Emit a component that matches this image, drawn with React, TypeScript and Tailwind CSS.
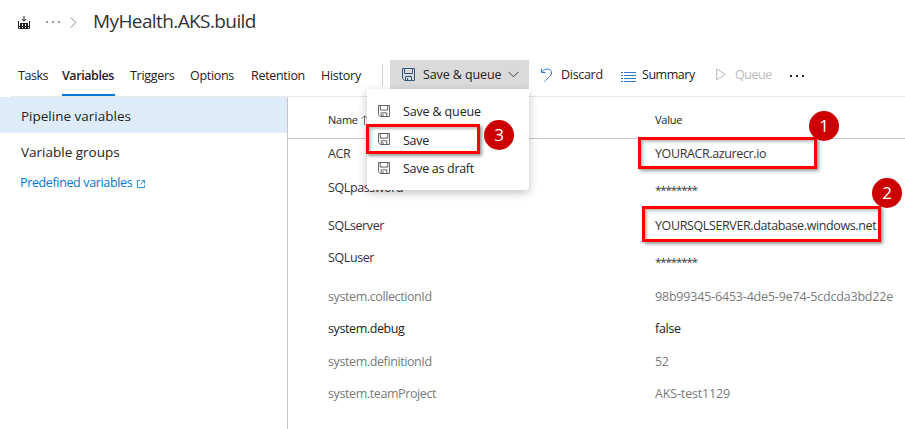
import React from "react";

const font = "font-['Open_Sans','Noto_Sans',sans-serif]";

function SaveIcon({ className }: { className: string }) {
  return (
    <svg viewBox="0 0 13 13" fill="none" stroke="currentColor" className={className}>
      <path d="M.5.5h12v12h-10l-2-2zM2.5.5v5h8v-5M3.500 12.500v-4h6v4M5.500 10v2.500" />
    </svg>
  );
}

function Dots({ className, gap }: { className: string; gap: string }) {
  return (
    <div className={`flex items-center ${gap} ${className}`}>
      <i className="size-[2px] bg-current" />
      <i className="size-[2px] bg-current" />
      <i className="size-[2px] bg-current" />
    </div>
  );
}

const tabs = [
  { name: "Tasks", cls: "w-[28px] mr-[16px] pb-[10px] tracking-[-0.45px]" },
  { name: "Variables", cls: "w-[53px] mr-[15px] pb-[8px] tracking-[-0.42px] font-semibold border-b-2 border-[#0078d4]" },
  { name: "Triggers", cls: "w-[44px] mr-[16px] pb-[10px] tracking-[-0.3px]" },
  { name: "Options", cls: "w-[44px] mr-[17px] pb-[10px] tracking-[-0.3px]" },
  { name: "Retention", cls: "w-[54px] mr-[16px] pb-[10px] tracking-[-0.3px]" },
  { name: "History", cls: "w-[40px] pb-[10px] tracking-[-0.25px]" },
];

const dark = "text-[#333]";
const muted = "text-[#7a7a7a]";

const rows = [
  { name: "ACR", value: "YOURACR.azurecr.io", h: "h-[31px]", n: "", v: "tracking-[-0.38px]", c: dark },
  { name: "SQLpassword", value: "********", h: "h-[38px]", n: "pb-[2px]", v: "tracking-[-1.1px] text-[11.5px] pt-px", c: dark },
  { name: "SQLserver", value: "YOURSQLSERVER.database.windows.net", h: "h-[35px]", n: "pt-[2px]", v: "pt-[2px] tracking-[-0.38px]", c: dark },
  { name: "SQLuser", value: "********", h: "h-[38px]", n: "pb-[8px]", v: "tracking-[-1.1px] text-[11.5px]", c: dark },
  { name: "system.collectionId", value: "98b99345-6453-4de5-9e74-5cdcda3bd22e", h: "h-[32px]", n: "", v: "tracking-[-0.19px]", c: muted },
  { name: "system.debug", value: "false", h: "h-[32px]", n: "", v: "tracking-[-0.3px]", c: "text-[#222]" },
  { name: "system.definitionId", value: "52", h: "h-[33px]", n: "pt-[2px]", v: "pt-[2px] tracking-[-0.3px]", c: muted },
  { name: "system.teamProject", value: "AKS-test1129", h: "h-[32px]", n: "", v: "tracking-[-0.15px]", c: muted },
];

const menu = [
  { label: "Save & queue", cls: "pt-[2px] tracking-[-0.15px]" },
  { label: "Save", cls: "pt-[3px] tracking-[-0.25px]" },
  { label: "Save as draft", cls: "pt-[2px] tracking-[-0.3px]" },
];

function Badge({ n, cls }: { n: number; cls: string }) {
  return (
    <div className={`absolute flex size-[30px] items-center justify-center rounded-full bg-[#c00] pb-px text-[17px] leading-none text-white ${cls}`}>{n}</div>
  );
}

export default function App() {
  return (
    <div className={`relative flex h-[429px] w-[905px] flex-col overflow-hidden whitespace-nowrap bg-white text-[12.5px] text-[#222] ${font}`}>
      <header className="flex h-[44px] items-center pl-[18px]">
        <svg viewBox="0 0 12 13" className="w-3 shrink-0" fill="none" stroke="#222">
          <path d="M6 0v5M3.800 3L6 5.200 8.200 3M.5 5v7.500h11V5" />
          <path d="M2 7.500h8M1 10.500h10" />
          <path strokeDasharray="2 1" d="M2 8.500h8M2 9.500h8" />
          <path d="M2 11.500h2M5 11.500h2M8 11.500h2" />
        </svg>
        <Dots gap="gap-[4px]" className="ml-[16px] w-[16px] text-[#999]" />
        <svg viewBox="0 0 7 11" className="ml-[8px] w-[7px]" fill="none" stroke="#888"><path d="M.8.5l5 5-5 5" /></svg>
        <h1 className="ml-[16px] pb-px text-[19px] tracking-[-0.6px] text-[#333]">MyHealth.AKS.build</h1>
      </header>
      <nav className="ml-[10px] flex h-[53px] items-stretch border-b border-[#eaeaea] pl-[8px]">
        {tabs.map((t) => (
          <div key={t.name} className={`flex items-end ${t.cls}`}>{t.name}</div>
        ))}
        <div className="ml-[21px] mt-[20px] h-[22px] w-px bg-[#ccc]" />
        <div className="ml-[7px] mt-[16px] flex h-[29px] w-[139px] items-center bg-[#dadada] pl-[12px]">
          <SaveIcon className="w-[13px] text-[#31587d]" />
          <span className="ml-[8px] w-[78px] pt-px tracking-[-0.1px]">Save &amp; queue</span>
          <svg viewBox="0 0 11 7" className="ml-[7px] w-[11px]" fill="none" stroke="#444"><path d="M.5.8l5 5 5-5" /></svg>
        </div>
        <div className="mt-[16px] flex h-[29px] items-center pl-[12px]">
          <svg viewBox="0 0 12 14" className="w-[12px]" fill="none" stroke="#3279ca"><path d="M.5.5v4h4M.5 4.500C4-.5 10.500 0 10.500 5c0 3-4 5-7 8.500" /></svg>
          <span className="ml-[8px] w-[41px] pt-px tracking-[-0.3px]">Discard</span>
          <svg viewBox="0 0 15 11" className="ml-[19px] mt-[3px] w-[15px]" fill="none" stroke="#3279ca"><path d="M0 1.500h2M3 1.500h12M0 4.500h2M3 4.500h12M0 7.500h2M3 7.500h12M0 10.500h2M3 10.500h12" /></svg>
          <span className="ml-[6px] w-[53px] pt-px tracking-[-0.45px]">Summary</span>
          <svg viewBox="0 0 10 13" className="ml-[21px] w-[10px]" fill="none" stroke="#bbb"><path d="M.7.9v11l8.500-5.500z" /></svg>
          <span className="ml-[9px] w-[37px] pt-px tracking-[-0.45px] text-[#bbb]">Queue</span>
          <Dots gap="gap-[4px]" className="ml-[18px] mt-[3px]" />
        </div>
      </nav>
      <div className="flex flex-1">
        <aside className="w-[288px] shrink-0 border-r border-[#c8c8c8] text-[13.500px]">
          <div className="flex h-[36px] items-center bg-[#deecf9] pl-[21px] pt-[2px]">Pipeline variables</div>
          <div className="flex h-[36px] items-center pl-[21px] pt-[2px]">Variable groups</div>
          <div className="flex h-[26px] items-center pl-[20px] pt-[3px] text-[12.5px] text-[#0078d4]">
            <span className="w-[112px] tracking-[-0.36px]">Predefined variables</span>
            <svg viewBox="0 0 8 8" className="ml-[5px] w-2" fill="none" stroke="currentColor" strokeWidth=".8"><path d="M3 .5H.5v7h7V5M4.500.5h3v3M7.500.5l-4 4" /></svg>
          </div>
        </aside>
        <main className="flex-1">
          <div className="flex h-[42px] items-center border-b border-[#c8c8c8] pl-[40px] pt-[5px] text-[11px] tracking-[-0.25px]">
            <span className="w-[33px]">Name</span>
            <svg viewBox="0 0 7 10" className="w-[7px]" fill="none" stroke="#777"><path d="M3.500 10V.8M.5 3.800l3-3 3 3" /></svg>
            <span className="ml-[287px]">Value</span>
          </div>
          {rows.map((r) => (
            <div key={r.name} className={`flex items-center pl-[40px] ${r.c} ${r.h}`}>
              <span className={`w-[327px] tracking-[-0.4px] ${r.n}`}>{r.name}</span>
              <span className={r.v}>{r.value}</span>
            </div>
          ))}
        </main>
      </div>
      <div className="absolute left-[367px] top-[89px] h-[101px] w-[162px] rounded-b-sm bg-white pt-[8px] shadow-[0_3px_10px_rgba(0,0,0,0.24)]">
        {menu.map((m) => (
          <div key={m.label} className="flex h-[28.500px] items-center pl-[11px]">
            <SaveIcon className="mb-px w-[12px] text-[#555]" />
            <span className={`ml-[13px] ${m.cls}`}>{m.label}</span>
          </div>
        ))}
      </div>
      <div className="absolute left-[366px] top-[124px] h-[30px] w-[114px] border-3 border-[#f00] shadow-[2px_2px_3px_#0006,inset_2px_2px_3px_#0004]" />
      <div className="absolute left-[638px] top-[137px] h-[32px] w-[179px] border-3 border-[#f00] shadow-[2px_2px_3px_#0006,inset_2px_2px_3px_#0004]" />
      <div className="absolute left-[642px] top-[206px] h-[36px] w-[239px] border-3 border-[#f00] shadow-[2px_2px_3px_#0006,inset_2px_2px_3px_#0004]" />
      <Badge n={1} cls="left-[809px] top-[111px]" />
      <Badge n={2} cls="left-[872px] top-[178px]" />
      <Badge n={3} cls="left-[484px] top-[120px]" />
    </div>
  );
}
